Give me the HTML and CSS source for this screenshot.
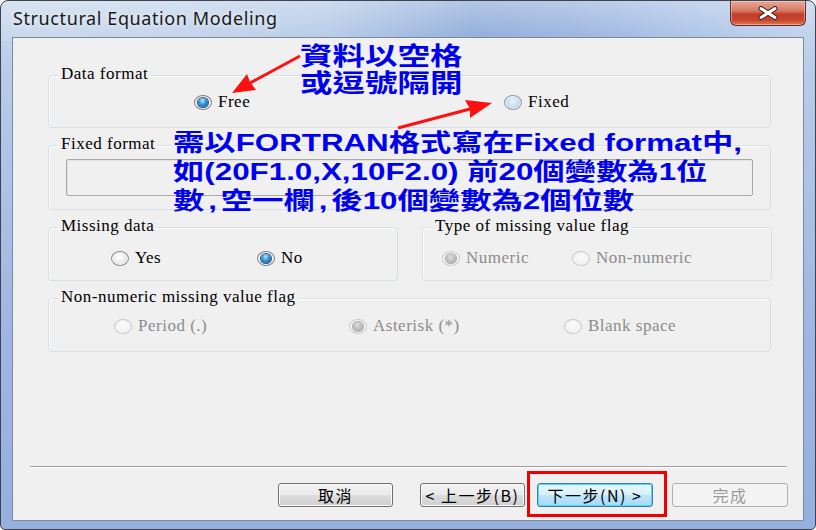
FILE: index.html
```html
<!DOCTYPE html>
<html lang="zh-Hant">
<head>
<meta charset="utf-8">
<title>Structural Equation Modeling</title>
<link rel="stylesheet" href="styles.css">
</head>
<body>
<div class="window">
  <div class="titlebar">
    <span class="title">Structural Equation Modeling</span>
    <div class="close">
      <svg width="24" height="14" viewBox="0 0 24 14"><path d="M5 2.5 L19 11.5 M19 2.5 L5 11.5" stroke="#3a1a14" stroke-width="5" stroke-linecap="round"/><path d="M5 2.5 L19 11.5 M19 2.5 L5 11.5" stroke="#ffffff" stroke-width="3" stroke-linecap="round"/></svg>
    </div>
  </div>
  <div class="client">
    <div class="groups">
      <div class="group g-data">
        <span class="glabel">Data format</span>
        <label class="opt o-free"><span class="radio on"></span>Free</label>
        <label class="opt o-fixed"><span class="radio hover"></span>Fixed</label>
      </div>
      <div class="group g-fixed">
        <span class="glabel">Fixed format</span>
        <div class="textbox"></div>
      </div>
      <div class="row">
        <div class="group g-missing">
          <span class="glabel">Missing data</span>
          <label class="opt o-yes"><span class="radio"></span>Yes</label>
          <label class="opt o-no"><span class="radio on"></span>No</label>
        </div>
        <div class="group g-type">
          <span class="glabel">Type of missing value flag</span>
          <label class="opt dis o-num"><span class="radio on"></span>Numeric</label>
          <label class="opt dis o-nonnum"><span class="radio"></span>Non-numeric</label>
        </div>
      </div>
      <div class="group g-flag">
        <span class="glabel">Non-numeric missing value flag</span>
        <label class="opt dis o-period"><span class="radio"></span>Period (.)</label>
        <label class="opt dis o-ast"><span class="radio on"></span>Asterisk (*)</label>
        <label class="opt dis o-blank"><span class="radio"></span>Blank space</label>
      </div>
    </div>
    <div class="footer">
      <div class="sep"></div>
      <div class="buttons">
        <button class="btn b-cancel">取消</button>
        <button class="btn b-back">&lt; 上一步(B)</button>
        <button class="btn b-next default">下一步(N) &gt;</button>
        <button class="btn b-finish" disabled>完成</button>
      </div>
    </div>
  </div>

  <svg class="arrows" width="816" height="530" viewBox="0 0 816 530">
    <line x1="300" y1="56" x2="250" y2="83" stroke="#ff1010" stroke-width="3"/>
    <polygon points="232,93 247,74 250,82 256,90" fill="#ff1010"/>
    <line x1="398" y1="128" x2="470" y2="109" stroke="#ff1010" stroke-width="3"/>
    <polygon points="492,103 465,100 470,109 470,118" fill="#ff1010"/>
  </svg>
  <div class="note note1"><span>資料以空格</span><span>或逗號隔開</span></div>
  <div class="note note2"><span>需以FORTRAN格式寫在Fixed format中,</span><span>如(20F1.0,X,10F2.0) 前20個變數為1位</span><span>數<span class="cm">,</span>空一欄<span class="cm">,</span>後10個變數為2個位數</span></div>
  <div class="highlight"></div>
</div>
</body>
</html>
```

FILE: styles.css
```css
html, body {
  margin: 0;
  padding: 0;
  background: #ffffff;
}

.window {
  position: relative;
  box-sizing: border-box;
  width: 816px;
  height: 530px;
  border: 1px solid #3d4450;
  border-radius: 8px 8px 5px 5px;
  background:
    linear-gradient(180deg, rgba(255,255,255,0.35) 0%, rgba(255,255,255,0.08) 7%, rgba(255,255,255,0) 12%),
    linear-gradient(90deg, #c4d5ec 0%, #c0d2ea 20%, #b2c8e6 40%, #8aa8d8 58%, #93afdc 70%, #a8c0e6 85%, #bccfea 100%) top / 100% 40px no-repeat,
    linear-gradient(180deg, #c2d4ec 0%, #b4c8e8 20%, #9fb7e2 60%, #95afdf 100%);
  display: flex;
  flex-direction: column;
  overflow: hidden;
}

.titlebar {
  height: 36px;
  display: flex;
  align-items: flex-start;
  flex: none;
}

.title {
  font-family: "Noto Sans", "Open Sans", sans-serif;
  font-size: 18px;
  letter-spacing: 0.6px;
  color: #1a1a1a;
  margin: 5px 0 0 12px;
  text-shadow: 0 0 6px rgba(255,255,255,0.9);
}

.close {
  margin-left: auto;
  margin-right: 9px;
  width: 76px;
  height: 25px;
  box-sizing: border-box;
  border: 1px solid #6b2a22;
  border-top: none;
  border-radius: 0 0 6px 6px;
  background: linear-gradient(180deg, #e9a898 0%, #d67a66 40%, #c23f2c 55%, #c9452f 80%, #dd7a5a 100%);
  display: flex;
  align-items: center;
  justify-content: center;
  box-shadow: inset 0 0 0 1px rgba(255,255,255,0.35);
}

.client {
  flex: 1;
  margin: 0 11px 8px 11px;
  border: 1px solid #7d8a9c;
  background: #f0f0f0;
  display: flex;
  flex-direction: column;
  font-family: "Liberation Serif", "Times New Roman", serif;
  font-size: 17px;
  letter-spacing: 0.5px;
  color: #000;
}

.groups {
  padding: 37px 32px 0 35px;
  display: flex;
  flex-direction: column;
  gap: 17px;
}

.group {
  position: relative;
  box-sizing: border-box;
  border: 1px solid #d5dfe5;
  border-radius: 4px;
  box-shadow: inset 1px 1px 0 #ffffff;
}

.glabel {
  position: absolute;
  top: -11px;
  left: 9px;
  padding: 0 3px;
  background: #f0f0f0;
  line-height: 18px;
  white-space: nowrap;
}

.g-data { height: 53px; }
.g-fixed { height: 65px; padding: 13px 17px 0 17px; }
.row {
  display: grid;
  grid-template-columns: 350px 350px;
  gap: 24px;
}
.g-missing, .g-type { height: 54px; }
.g-flag { height: 54px; }

.opt {
  position: absolute;
  display: flex;
  align-items: center;
  gap: 6px;
  line-height: 18px;
  white-space: nowrap;
}
.opt.dis { color: #8c8c8c; }

.o-free   { left: 145px; top: 17px; }
.o-fixed  { left: 455px; top: 17px; }
.o-yes    { left: 62px;  top: 21px; }
.o-no     { left: 208px; top: 21px; }
.o-num    { left: 19px;  top: 21px; }
.o-nonnum { left: 149px; top: 21px; }
.o-period { left: 65px;  top: 18px; }
.o-ast    { left: 300px; top: 18px; }
.o-blank  { left: 515px; top: 18px; }

.radio {
  position: relative;
  box-sizing: border-box;
  width: 18px;
  height: 15px;
  border-radius: 50%;
  border: 1px solid #8d8d8d;
  background: radial-gradient(ellipse at 45% 40%, #ffffff 0%, #eeeeee 45%, #d4d4d4 100%);
  box-shadow: inset 0 0 0 1px #f6f6f6;
  flex: none;
}
.radio.hover {
  border-color: #8e9aa6;
  background: radial-gradient(ellipse at 50% 40%, #eaf3fb 0%, #cfe0f2 45%, #a9c6e6 100%);
  box-shadow: inset 0 0 0 1px #f4f8fc;
}
.radio.on {
  background: radial-gradient(ellipse at 50% 40%, #ffffff 0%, #e6e6e6 100%);
  border-color: #7f7f7f;
}
.radio.on::after {
  content: "";
  position: absolute;
  left: 3px;
  top: 2px;
  width: 10px;
  height: 9px;
  border-radius: 50%;
  background: radial-gradient(ellipse at 45% 30%, #bfe6ff 0%, #3a9ee0 40%, #0e5da8 80%, #0b3f74 100%);
  box-shadow: 0 0 0 1px #2b5278;
}
.opt.dis .radio {
  border-color: #c9c9c9;
  background: radial-gradient(ellipse at 50% 40%, #fbfbfb 0%, #ececec 100%);
  box-shadow: inset 0 0 0 1px #f7f7f7;
}
.opt.dis .radio.on::after {
  background: radial-gradient(ellipse at 45% 35%, #e0e0e0 0%, #b6b6b6 60%, #9c9c9c 100%);
  box-shadow: 0 0 0 1px #a9a9a9;
}

.textbox {
  height: 37px;
  box-sizing: border-box;
  border: 1px solid #a9a9a9;
  border-radius: 2px;
  background: #f0f0f0;
  box-shadow: inset 1px 1px 0 #e2e2e2;
}

.footer {
  margin-top: auto;
  padding-bottom: 13px;
}

.sep {
  margin: 0 16px 0 17px;
  height: 1px;
  background: #a0a0a0;
  border-bottom: 1px solid #ffffff;
}

.buttons {
  margin-top: 15px;
  padding-right: 15px;
  display: flex;
  justify-content: flex-end;
}

.btn {
  box-sizing: border-box;
  height: 24px;
  padding: 0;
  border: 1px solid #707070;
  border-radius: 3px;
  background: linear-gradient(180deg, #f2f2f2 0%, #ebebeb 48%, #dddddd 52%, #cfcfcf 100%);
  box-shadow: inset 0 0 0 1px #fbfbfb;
  font-family: "Noto Sans CJK TC", "Noto Sans", sans-serif;
  font-size: 16px;
  letter-spacing: 1.5px;
  line-height: 20px;
  color: #000;
}
.b-cancel { width: 115px; margin-right: 27px; }
.b-back   { width: 105px; margin-right: 12px; white-space: nowrap; }
.b-next   { width: 116px; margin-right: 19px; white-space: nowrap; }
.b-finish { width: 116px; }

.btn.default {
  border-color: #3c7fb1;
  background: linear-gradient(180deg, #eaf6fd 0%, #d9f0fc 48%, #bee6fd 52%, #a7d9f5 100%);
  box-shadow: inset 0 0 0 1px #48d8fb;
}
.btn:disabled {
  border-color: #adb2b5;
  background: #f4f4f4;
  box-shadow: none;
  color: #9c9c9c;
}

.arrows {
  position: absolute;
  left: -1px;
  top: -1px;
  pointer-events: none;
}

.note {
  position: absolute;
  display: flex;
  flex-direction: column;
  color: #0000f0;
  font-weight: bold;
  white-space: nowrap;
  transform-origin: 0 0;
}
.note1 {
  left: 299px;
  top: 40px;
  font-family: "Noto Sans CJK TC", sans-serif;
  font-size: 25px;
  line-height: 27px;
  transform: scaleX(1.3);
}
.note2 {
  left: 172px;
  top: 127px;
  font-family: "Liberation Sans", "Noto Sans CJK TC", sans-serif;
  font-size: 24px;
  line-height: 29px;
  transform: scaleX(1.305);
}
.note2 .cm {
  padding: 0 3px;
}

.highlight {
  position: absolute;
  left: 526px;
  top: 470px;
  width: 140px;
  height: 46px;
  box-sizing: border-box;
  border: 3px solid #f20000;
}
```
